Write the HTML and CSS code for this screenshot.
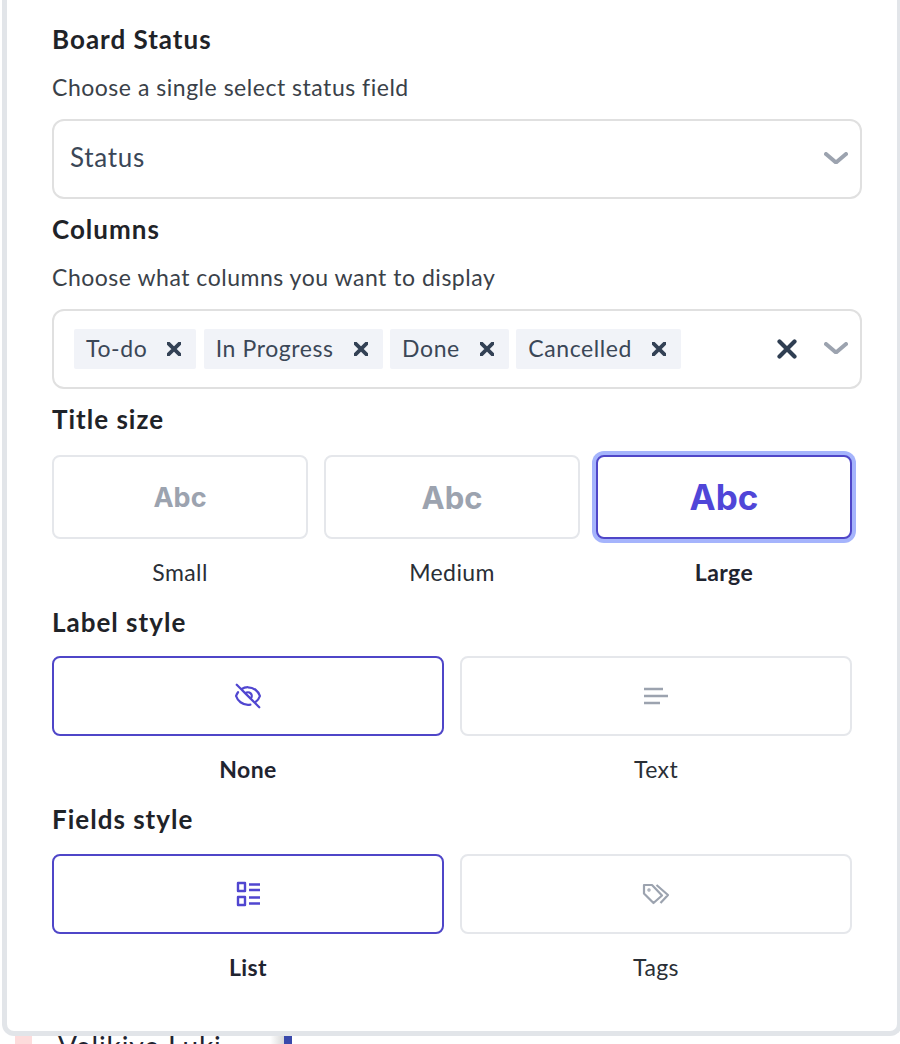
FILE: index.html
```html
<!DOCTYPE html>
<html lang="en">
<head>
<meta charset="utf-8">
<title>Board settings</title>
<link rel="stylesheet" href="styles.css">
</head>
<body>
<main class="panel">
  <section class="field">
    <h2 class="title">Board Status</h2>
    <p class="hint">Choose a single select status field</p>
    <div class="select">
      <span class="value">Status</span>
      <svg class="chevron" viewBox="0 0 24 12"><path d="M2 2l10 8.500L22 2"/></svg>
    </div>
  </section>
  <section class="field">
    <h2 class="title">Columns</h2>
    <p class="hint">Choose what columns you want to display</p>
    <div class="select multi">
      <div class="chips">
        <span class="chip"><span class="chip-text">To-do</span><svg class="chip-x" viewBox="0 0 12 12"><path d="M1 1l10 10M11 1L1 11"/></svg></span>
        <span class="chip"><span class="chip-text">In Progress</span><svg class="chip-x" viewBox="0 0 12 12"><path d="M1 1l10 10M11 1L1 11"/></svg></span>
        <span class="chip"><span class="chip-text">Done</span><svg class="chip-x" viewBox="0 0 12 12"><path d="M1 1l10 10M11 1L1 11"/></svg></span>
        <span class="chip"><span class="chip-text">Cancelled</span><svg class="chip-x" viewBox="0 0 12 12"><path d="M1 1l10 10M11 1L1 11"/></svg></span>
      </div>
      <svg class="clear" viewBox="0 0 20 20"><path d="M2.500 2.500l15 15M17.500 2.500l-15 15"/></svg>
      <svg class="chevron" viewBox="0 0 24 12"><path d="M2 2l10 8.500L22 2"/></svg>
    </div>
  </section>
  <section class="tile-section">
    <h2 class="title">Title size</h2>
    <div class="tiles three">
      <div class="option"><div class="tile"><span class="abc small">Abc</span></div><span class="caption plain">Small</span></div>
      <div class="option"><div class="tile"><span class="abc medium">Abc</span></div><span class="caption plain">Medium</span></div>
      <div class="option"><div class="tile ring"><span class="abc large">Abc</span></div><span class="caption">Large</span></div>
    </div>
  </section>
  <section class="tile-section label-section">
    <h2 class="title">Label style</h2>
    <div class="tiles two">
      <div class="option"><div class="tile short active">
        <svg class="icon eye" viewBox="0 0 24 24"><path d="M13.875 18.825A10.050 10.050 0 0112 19c-4.478 0-8.268-2.943-9.543-7a9.970 9.970 0 011.563-3.029m5.858.908a3 3 0 114.243 4.243M9.878 9.878l4.242 4.242M9.880 9.880l-3.290-3.290m7.532 7.532l3.290 3.290M3 3l3.590 3.590m0 0A9.953 9.953 0 0112 5c4.478 0 8.268 2.943 9.543 7a10.025 10.025 0 01-4.132 5.411m0 0L21 21"/></svg>
      </div><span class="caption">None</span></div>
      <div class="option"><div class="tile short">
        <svg class="icon off" viewBox="0 0 24 24"><path d="M0 5h19M0 12h24M0 19h16"/></svg>
      </div><span class="caption plain">Text</span></div>
    </div>
  </section>
  <section class="tile-section fields-section">
    <h2 class="title">Fields style</h2>
    <div class="tiles two">
      <div class="option"><div class="tile short active">
        <svg class="icon on" viewBox="0 0 24 24"><path d="M2 1h7v8H2zM2 15h7v8H2zM13 2.500h11M13 8h11M13 15.500h11M13 21.500h11"/></svg>
      </div><span class="caption">List</span></div>
      <div class="option"><div class="tile short">
        <svg class="icon tag" viewBox="0 0 26 20"><path d="M1 1h8l10 10.500L10.500 19 1 9.500zM13.500 1L25 11l-7.500 8"/><circle cx="6" cy="6" r=".6"/></svg>
      </div><span class="caption plain">Tags</span></div>
    </div>
  </section>
</main>
<div class="behind">
  <span class="swatch"></span>
  <span class="place">Velikiye Luki</span>
  <span class="fade"></span>
  <span class="strip"></span>
</div>
</body>
</html>
```

FILE: styles.css
```css
* { box-sizing: border-box; }
html, body { margin: 0; height: 1044px; overflow: hidden; background: #fff; }
body { font-family: "Lato", "Liberation Sans", sans-serif; color: #1f2328; width: 900px; }

.panel {
  width: 900px;
  height: 1036px;
  margin-left: 2px;
  padding: 21px 38px 0 45px;
  background: #fff;
  border: 5px solid #e2e5e9;
  border-top: 0;
  border-radius: 0 0 12px 12px;
}

.title { margin: 0; font-size: 26px; line-height: 36px; font-weight: 700; letter-spacing: 1px; color: #1f2328; }
.hint { margin: 12px 0 14px; font-size: 23px; line-height: 36px; letter-spacing: .52px; color: #3a4149; }

.field { height: 190px; }

.select {
  display: flex;
  align-items: center;
  width: 810px;
  height: 80px;
  padding: 0 12px 0 16px;
  border: 2px solid #e0e0e0;
  border-radius: 12px;
}
.value { flex: 1; padding-bottom: 5px; font-size: 26px; letter-spacing: .7px; color: #3b4757; }
.chevron { width: 24px; height: 12px; margin-bottom: 2px; fill: none; stroke: #9ca3af; stroke-width: 4; stroke-linecap: round; stroke-linejoin: round; }

.multi { padding-left: 20px; }
.chips { display: flex; flex: 1; gap: 7.4px; }
.chip {
  display: flex;
  align-items: center;
  height: 40px;
  padding: 0 15px 0 12px;
  gap: 20px;
  background: #f1f3f8;
  border-radius: 2px;
  font-size: 23px;
  letter-spacing: .6px;
  color: #3b4757;
}
.chip-text { margin-bottom: 3px; }
.chip-x { width: 14px; height: 14px; fill: none; stroke: #334155; stroke-width: 3.2; stroke-linecap: round; }
.clear { width: 20px; height: 20px; margin-right: 27px; fill: none; stroke: #2f3e52; stroke-width: 4.2; stroke-linecap: round; }

.label-section { margin-top: 20px; }
.fields-section { margin-top: 20px; }

.tiles { display: grid; gap: 16px; width: 800px; margin-top: 18px; }
.two { grid-template-columns: repeat(2, 392px); margin-top: 17px; }
.label-section .tiles { margin-top: 16px; }
.three { grid-template-columns: repeat(3, 256px); }
.option { display: flex; flex-direction: column; align-items: center; }

.tile {
  display: flex;
  align-items: center;
  justify-content: center;
  width: 100%;
  height: 84px;
  border: 2px solid #e5e7eb;
  border-radius: 8px;
  background: #fff;
}
.short { height: 80px; }
.active { border-color: #4f46c8; }
.ring { border-color: #4f46c8; box-shadow: 0 0 0 4px #a5b4fc; }

.abc { font-family: "Inter", "Liberation Sans", sans-serif; font-weight: 700; color: #9ca3af; }
.small { font-size: 27px; }
.medium { font-size: 31px; }
.large { font-size: 35px; color: #5046d8; }

.caption { margin-top: 21px; font-size: 23px; line-height: 24px; letter-spacing: .4px; font-weight: 700; color: #1f2430; }
.plain { font-weight: 400; color: #2a2f36; }

.icon { width: 24px; height: 24px; fill: none; stroke-width: 2.4; overflow: visible; stroke-linejoin: round; }
.on { stroke: #5046d0; }
.off { stroke: #9ca3af; }
.eye { width: 30px; height: 30px; stroke: #5046d0; stroke-width: 1.8; stroke-linecap: round; }
.tag { width: 26px; height: 20px; stroke: #9ca3af; stroke-width: 2.2; }

.behind { display: flex; align-items: flex-start; height: 8px; padding-left: 15px; overflow: visible; }
.swatch { width: 17px; height: 8px; background: #fddcdc; }
.place { margin-left: 26px; font-size: 28px; line-height: 20px; letter-spacing: .9px; color: #1f2430; white-space: nowrap; }
.fade { width: 14px; height: 8px; margin-left: auto; background: linear-gradient(90deg, #fff, #d8d8d8); }
.strip { width: 8px; height: 8px; margin-right: 608px; background: #3949ab; }
```
